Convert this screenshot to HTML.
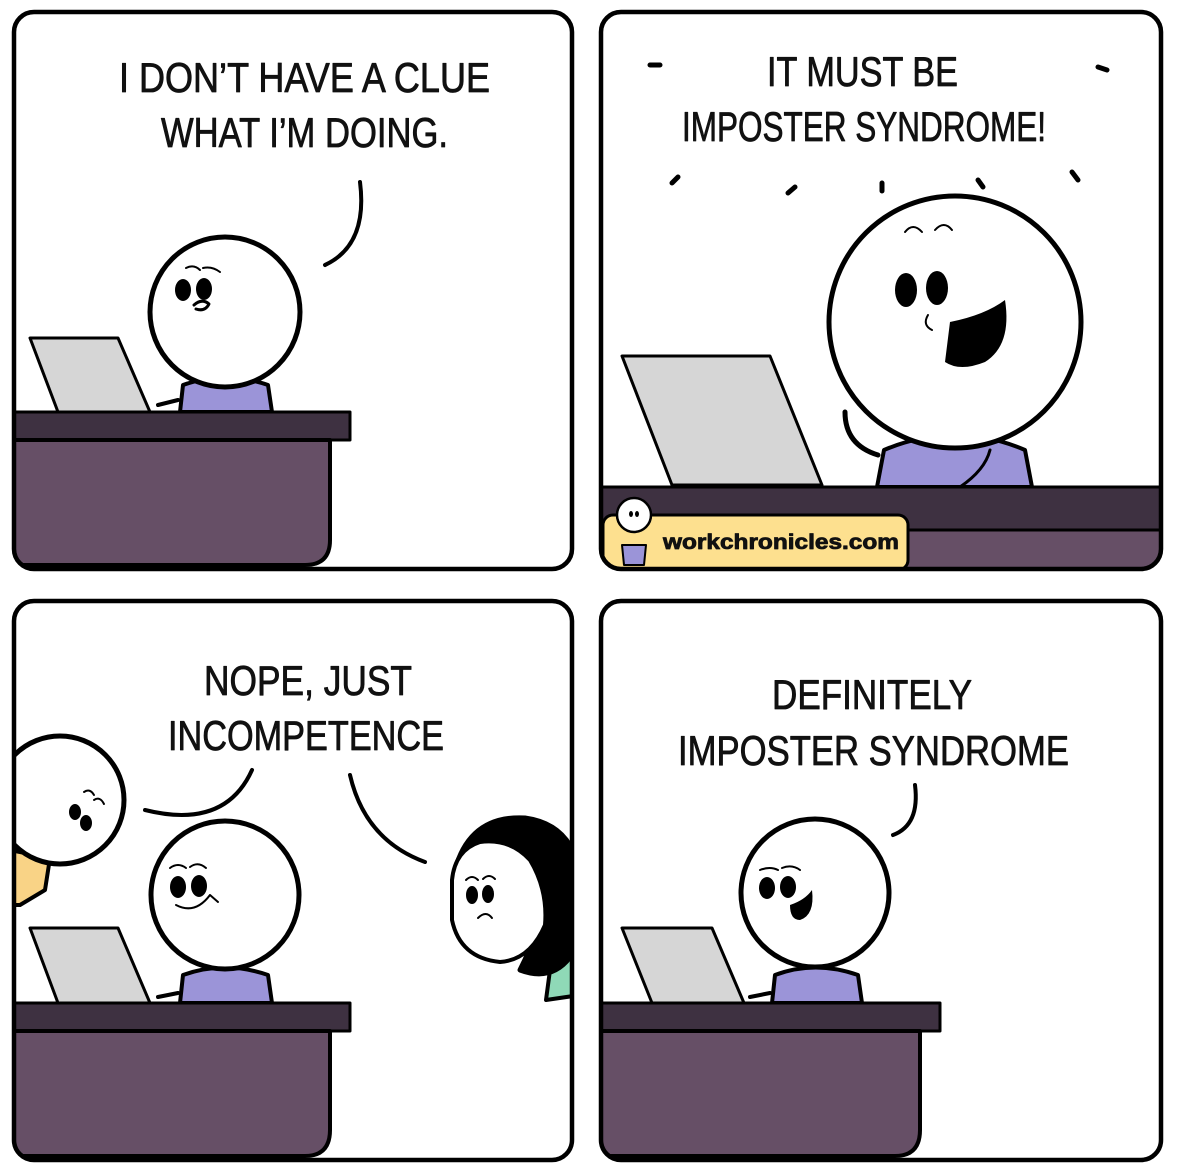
<!DOCTYPE html>
<html><head><meta charset="utf-8"><style>
html,body{margin:0;padding:0;background:#fff;width:1179px;height:1163px;overflow:hidden}
svg{display:block}
text{font-family:"Liberation Sans",sans-serif;font-size:42px;fill:#111;stroke:#111;stroke-width:0.8px}
</style></head><body>
<svg width="1179" height="1163" viewBox="0 0 1179 1163" xmlns="http://www.w3.org/2000/svg">
<defs>
<clipPath id="c1"><rect x="14" y="12" width="558" height="557" rx="20"/></clipPath>
<clipPath id="c2"><rect x="601" y="12" width="560" height="557" rx="20"/></clipPath>
<clipPath id="c3"><rect x="14" y="601" width="558" height="559" rx="20"/></clipPath>
<clipPath id="c4"><rect x="601" y="601" width="560" height="559" rx="20"/></clipPath>
</defs>
<g stroke="#000" stroke-width="5" stroke-linecap="round" stroke-linejoin="round">

<!-- PANEL 1 -->
<g clip-path="url(#c1)">
<rect x="14" y="12" width="558" height="557" fill="#fff" stroke="none"/>
<polygon points="30,338 118,338 150,412 58,412" fill="#d6d6d6" stroke-width="3"/>
<path d="M180,412 L183,385 Q225,370 268,385 L272,412 Z" fill="#9b94d8" stroke-width="4"/>
<path d="M158,405 L178,400" stroke-width="4"/>
<circle cx="225" cy="312" r="75" fill="#fff"/>
<ellipse cx="183" cy="290" rx="8" ry="11" fill="#000" stroke="none"/>
<ellipse cx="204" cy="289" rx="8" ry="11" fill="#000" stroke="none"/>
<path d="M186,268 Q194,264 200,270 M203,268 Q212,266 220,272" stroke-width="2" fill="none"/>
<path d="M194,305 Q202,298 209,304 Q205,312 196,309" stroke-width="3" fill="none"/>
<path d="M325,265 Q368,245 360,182" stroke-width="4" fill="none"/>
<rect x="10" y="412" width="340" height="28" fill="#3e3141" stroke-width="3"/>
<path d="M14,440 L330,440 L330,540 Q330,565 305,565 L14,565 Z" fill="#664f66" stroke-width="4"/>
</g>
<rect x="14" y="12" width="558" height="557" rx="20" fill="none" stroke-width="4.5"/>
<g stroke-width="0.8">
<text x="119" y="92" textLength="371" lengthAdjust="spacingAndGlyphs">I DON’T HAVE A CLUE</text>
<text x="161" y="147" textLength="287" lengthAdjust="spacingAndGlyphs">WHAT I’M DOING.</text>
</g>

<!-- PANEL 2 -->
<g clip-path="url(#c2)">
<rect x="601" y="12" width="560" height="557" fill="#fff" stroke="none"/>
<polygon points="622,356 770,356 822,485 672,485" fill="#d6d6d6" stroke-width="3"/>
<path d="M877,487 L884,450 Q955,420 1025,450 L1032,487 Z" fill="#9b94d8" stroke-width="4"/>
<path d="M960,487 Q985,470 990,450" stroke-width="3" fill="none"/>
<path d="M878,455 Q845,445 845,412" stroke-width="5" fill="none"/>
<circle cx="955" cy="322" r="126" fill="#fff"/>
<ellipse cx="906" cy="290" rx="11" ry="17" fill="#000" stroke="none"/>
<ellipse cx="937" cy="288" rx="11" ry="17" fill="#000" stroke="none"/>
<path d="M950,322 Q985,315 1005,300 Q1012,345 985,362 Q960,372 945,362 Z" fill="#000" stroke="none"/>
<path d="M905,232 Q913,222 922,232 M935,230 Q944,220 952,230" stroke-width="2" fill="none"/>
<path d="M928,315 Q922,325 932,330" stroke-width="2" fill="none"/>
<path d="M650,65 L660,65 M1098,67 L1107,70 M672,183 L678,177 M788,193 L795,187 M882,183 L882,191 M978,180 L983,187 M1072,172 L1078,180" stroke-width="5"/>
<rect x="598" y="487" width="566" height="43" fill="#3e3141" stroke-width="3"/>
<rect x="598" y="530" width="566" height="40" fill="#664f66" stroke-width="3"/>
<rect x="603" y="515" width="305" height="55" rx="10" fill="#fde08f" stroke-width="3"/>
<path d="M622,545 L624,565 L644,565 L646,545 Z" fill="#9b94d8" stroke-width="2"/>
<circle cx="634" cy="515" r="17" fill="#fff" stroke-width="2.5"/>
<ellipse cx="631" cy="514" rx="2" ry="3" fill="#000" stroke="none"/>
<ellipse cx="637" cy="514" rx="2" ry="3" fill="#000" stroke="none"/>
</g>
<rect x="601" y="12" width="560" height="557" rx="20" fill="none" stroke-width="4.5"/>
<g stroke-width="0.8">
<text x="767" y="86" textLength="191" lengthAdjust="spacingAndGlyphs">IT MUST BE</text>
<text x="682" y="141" textLength="364" lengthAdjust="spacingAndGlyphs">IMPOSTER SYNDROME!</text>
<text x="663" y="549" style="font-size:21px;font-weight:bold" textLength="236" lengthAdjust="spacingAndGlyphs">workchronicles.com</text>
</g>

<!-- PANEL 3 -->
<g clip-path="url(#c3)">
<rect x="14" y="601" width="558" height="559" fill="#fff" stroke="none"/>
<path d="M10,850 L50,858 L45,890 L20,905 L10,905 Z" fill="#f9d386" stroke-width="4"/>
<circle cx="60" cy="800" r="64" fill="#fff"/>
<ellipse cx="75" cy="812" rx="6" ry="8" fill="#000" stroke="none"/>
<ellipse cx="86" cy="823" rx="6" ry="8" fill="#000" stroke="none"/>
<path d="M84,792 Q90,788 94,795 M94,800 Q100,796 104,804" stroke-width="2" fill="none"/>
<path d="M145,810 Q225,830 252,770" stroke-width="4" fill="none"/>
<path d="M350,775 Q365,840 425,862" stroke-width="4" fill="none"/>
<polygon points="30,928 118,928 150,1003 58,1003" fill="#d6d6d6" stroke-width="3"/>
<path d="M180,1003 L183,975 Q225,960 268,975 L272,1003 Z" fill="#9b94d8" stroke-width="4"/>
<path d="M158,997 L178,993" stroke-width="4"/>
<circle cx="225" cy="895" r="74" fill="#fff"/>
<ellipse cx="178" cy="887" rx="8" ry="11" fill="#000" stroke="none"/>
<ellipse cx="199" cy="886" rx="8" ry="11" fill="#000" stroke="none"/>
<path d="M170,868 Q178,862 186,868 M190,867 Q198,861 206,868" stroke-width="2" fill="none"/>
<path d="M176,905 Q195,915 210,895 M210,895 L218,902" stroke-width="2" fill="none"/>
<path d="M546,1000 L552,955 L580,945 L580,995 Z" fill="#8fd9b7" stroke-width="4"/>
<path d="M455,870 Q470,815 525,818 Q575,825 580,880 L580,940 Q560,985 520,970 Q540,930 545,900 Q530,850 470,860 Z" fill="#000"/>
<circle cx="505" cy="895" r="56" fill="none" stroke-width="0"/>
<path d="M452,880 Q455,850 480,842 Q510,838 530,860 Q548,890 545,925 Q530,960 500,962 Q460,958 452,920 Z" fill="#fff" stroke-width="4"/>
<ellipse cx="472" cy="895" rx="6" ry="9" fill="#000" stroke="none"/>
<ellipse cx="488" cy="894" rx="6" ry="9" fill="#000" stroke="none"/>
<path d="M466,880 Q472,874 478,880 M483,879 Q489,873 495,879" stroke-width="2" fill="none"/>
<path d="M478,918 Q486,910 492,918" stroke-width="2" fill="none"/>
<rect x="10" y="1003" width="340" height="28" fill="#3e3141" stroke-width="3"/>
<path d="M14,1031 L330,1031 L330,1130 Q330,1156 305,1156 L14,1156 Z" fill="#664f66" stroke-width="4"/>
</g>
<rect x="14" y="601" width="558" height="559" rx="20" fill="none" stroke-width="4.5"/>
<g stroke-width="0.8">
<text x="204" y="695" textLength="208" lengthAdjust="spacingAndGlyphs">NOPE, JUST</text>
<text x="168" y="750" textLength="276" lengthAdjust="spacingAndGlyphs">INCOMPETENCE</text>
</g>

<!-- PANEL 4 -->
<g clip-path="url(#c4)">
<rect x="601" y="601" width="560" height="559" fill="#fff" stroke="none"/>
<polygon points="622,928 712,928 744,1003 652,1003" fill="#d6d6d6" stroke-width="3"/>
<path d="M772,1003 L775,975 Q815,960 858,975 L862,1003 Z" fill="#9b94d8" stroke-width="4"/>
<path d="M750,997 L770,993" stroke-width="4"/>
<circle cx="815" cy="893" r="74" fill="#fff"/>
<ellipse cx="767" cy="888" rx="8" ry="11" fill="#000" stroke="none"/>
<ellipse cx="788" cy="887" rx="8" ry="11" fill="#000" stroke="none"/>
<path d="M760,870 Q770,866 778,870 M782,868 Q792,864 800,870" stroke-width="2" fill="none"/>
<path d="M790,905 Q805,900 812,890 Q815,915 800,920 Q790,920 790,905 Z" fill="#000" stroke="none"/>
<path d="M893,835 Q920,825 915,785" stroke-width="4" fill="none"/>
<rect x="597" y="1003" width="343" height="28" fill="#3e3141" stroke-width="3"/>
<path d="M601,1031 L920,1031 L920,1130 Q920,1156 895,1156 L601,1156 Z" fill="#664f66" stroke-width="4"/>
</g>
<rect x="601" y="601" width="560" height="559" rx="20" fill="none" stroke-width="4.5"/>
<g stroke-width="0.8">
<text x="772" y="709" textLength="200" lengthAdjust="spacingAndGlyphs">DEFINITELY</text>
<text x="678" y="765" textLength="391" lengthAdjust="spacingAndGlyphs">IMPOSTER SYNDROME</text>
</g>
</g>
</svg>
</body></html>
